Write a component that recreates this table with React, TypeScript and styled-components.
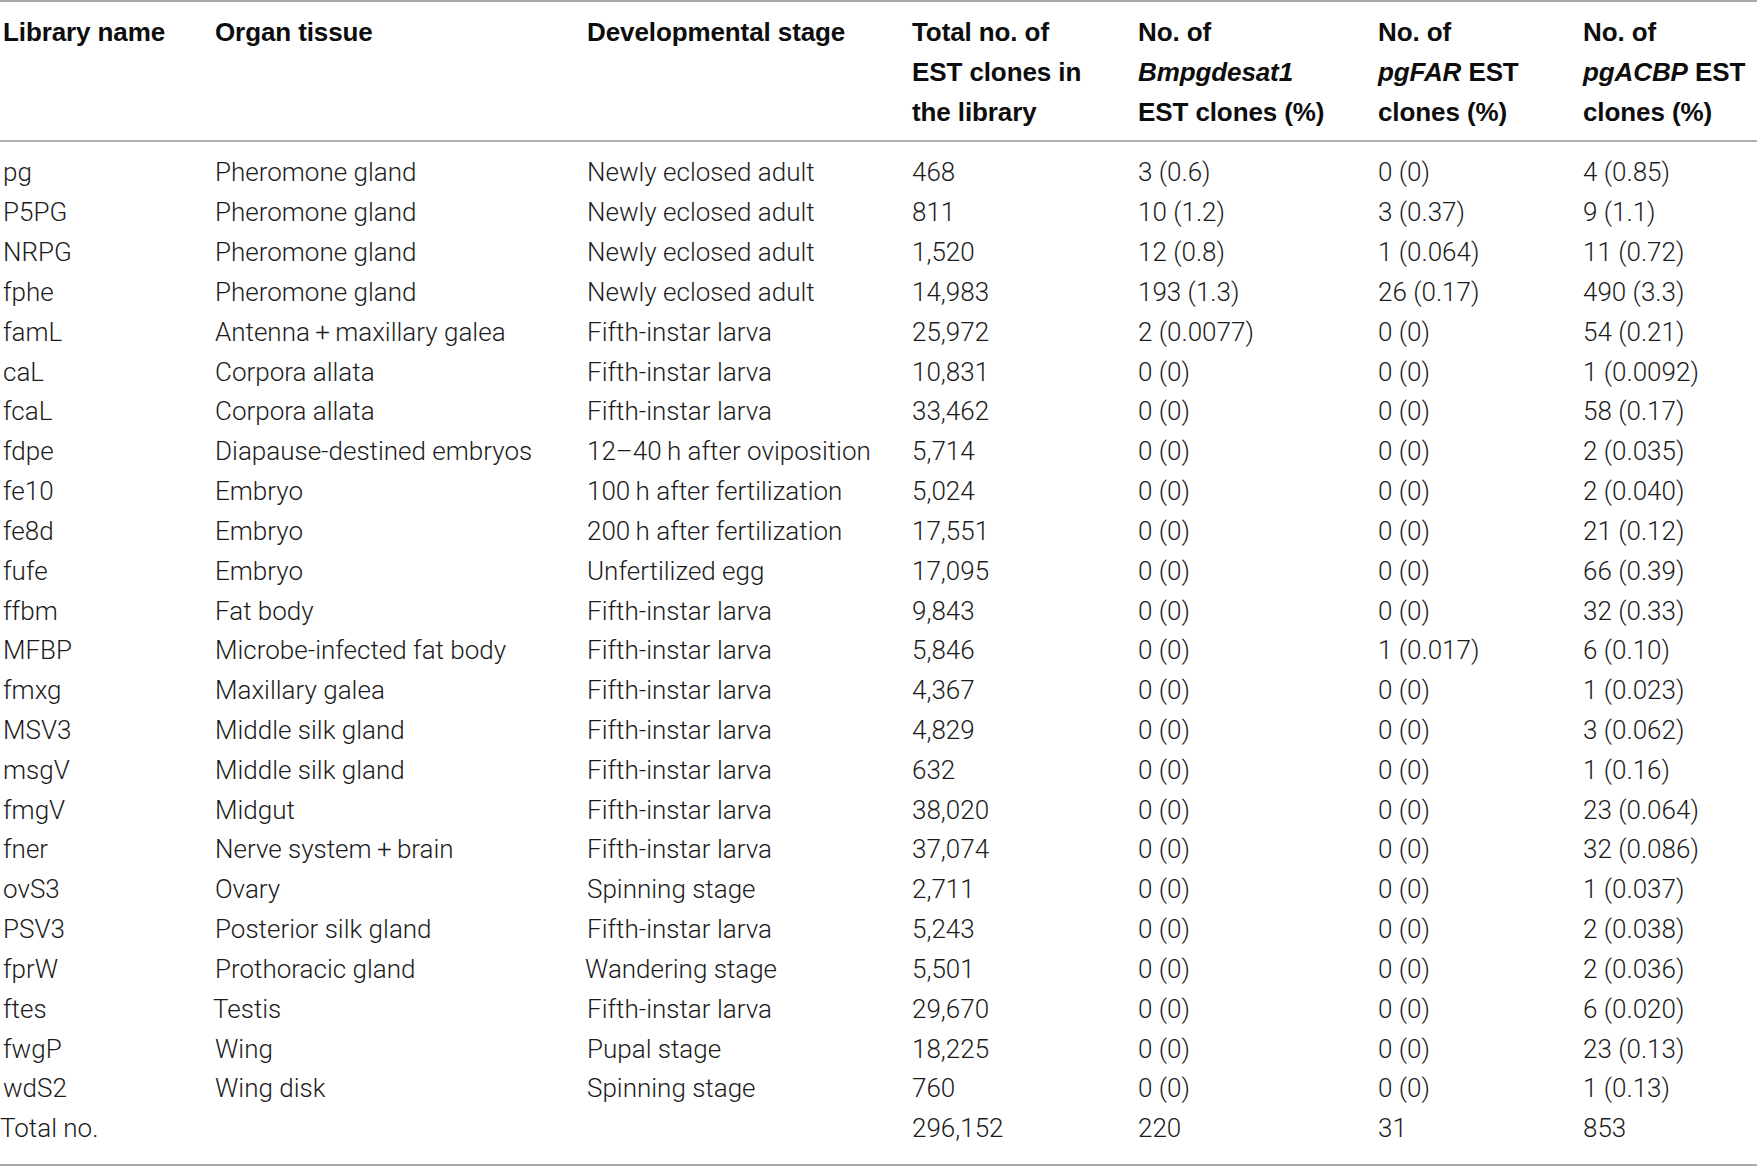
import React from "react";
import styled, { createGlobalStyle } from "styled-components";

const Global = createGlobalStyle`
  html, body { margin: 0; padding: 0; background: #ffffff; }
  body { font-family: Roboto, "Liberation Sans", sans-serif; color: #1c1c1c; }
`;

const COLS = "212px 372px 325px 226px 240px 205px 1fr";

const Table = styled.div`
  width: 1757px;
  border-top: 2px solid #a8a8a8;
  border-bottom: 2px solid #a8a8a8;
  box-sizing: border-box;
`;

const Header = styled.div`
  display: grid;
  grid-template-columns: ${COLS};
  padding: 11px 0 8px 3px;
  border-bottom: 2px solid #b0b0b0;
`;

const HeadCell = styled.div`
  font-family: "Liberation Sans", Arial, sans-serif;
  font-weight: 700;
  font-size: 26px;
  line-height: 39.8px;
  color: #0d0d0d;
  letter-spacing: -0.1px;
  white-space: nowrap;
  em { font-style: italic; }
`;

const Body = styled.div`
  padding: 11px 0 15px 0;
`;

const Row = styled.div`
  display: grid;
  grid-template-columns: ${COLS};
  padding-left: 3px;
  height: 39.83px;
  align-items: center;
`;

const Cell = styled.div<{ $shift?: number }>`
  font-weight: 300;
  font-size: 26px;
  line-height: 39.8px;
  white-space: nowrap;
  margin-left: ${(p) => p.$shift ?? 0}px;
`;

type R = [string, string, string, string, string, string, string, number?, number?];

const rows: R[] = [
  ["pg", "Pheromone gland", "Newly eclosed adult", "468", "3 (0.6)", "0 (0)", "4 (0.85)"],
  ["P5PG", "Pheromone gland", "Newly eclosed adult", "811", "10 (1.2)", "3 (0.37)", "9 (1.1)"],
  ["NRPG", "Pheromone gland", "Newly eclosed adult", "1,520", "12 (0.8)", "1 (0.064)", "11 (0.72)"],
  ["fphe", "Pheromone gland", "Newly eclosed adult", "14,983", "193 (1.3)", "26 (0.17)", "490 (3.3)"],
  ["famL", "Antenna\u2009+\u2009maxillary galea", "Fifth-instar larva", "25,972", "2 (0.0077)", "0 (0)", "54 (0.21)"],
  ["caL", "Corpora allata", "Fifth-instar larva", "10,831", "0 (0)", "0 (0)", "1 (0.0092)"],
  ["fcaL", "Corpora allata", "Fifth-instar larva", "33,462", "0 (0)", "0 (0)", "58 (0.17)"],
  ["fdpe", "Diapause-destined embryos", "12\u201340\u2009h after oviposition", "5,714", "0 (0)", "0 (0)", "2 (0.035)"],
  ["fe10", "Embryo", "100\u2009h after fertilization", "5,024", "0 (0)", "0 (0)", "2 (0.040)"],
  ["fe8d", "Embryo", "200\u2009h after fertilization", "17,551", "0 (0)", "0 (0)", "21 (0.12)"],
  ["fufe", "Embryo", "Unfertilized egg", "17,095", "0 (0)", "0 (0)", "66 (0.39)"],
  ["ffbm", "Fat body", "Fifth-instar larva", "9,843", "0 (0)", "0 (0)", "32 (0.33)"],
  ["MFBP", "Microbe-infected fat body", "Fifth-instar larva", "5,846", "0 (0)", "1 (0.017)", "6 (0.10)"],
  ["fmxg", "Maxillary galea", "Fifth-instar larva", "4,367", "0 (0)", "0 (0)", "1 (0.023)"],
  ["MSV3", "Middle silk gland", "Fifth-instar larva", "4,829", "0 (0)", "0 (0)", "3 (0.062)"],
  ["msgV", "Middle silk gland", "Fifth-instar larva", "632", "0 (0)", "0 (0)", "1 (0.16)"],
  ["fmgV", "Midgut", "Fifth-instar larva", "38,020", "0 (0)", "0 (0)", "23 (0.064)"],
  ["fner", "Nerve system\u2009+\u2009brain", "Fifth-instar larva", "37,074", "0 (0)", "0 (0)", "32 (0.086)"],
  ["ovS3", "Ovary", "Spinning stage", "2,711", "0 (0)", "0 (0)", "1 (0.037)"],
  ["PSV3", "Posterior silk gland", "Fifth-instar larva", "5,243", "0 (0)", "0 (0)", "2 (0.038)"],
  ["fprW", "Prothoracic gland", "Wandering stage", "5,501", "0 (0)", "0 (0)", "2 (0.036)", 0, -2],
  ["ftes", "Testis", "Fifth-instar larva", "29,670", "0 (0)", "0 (0)", "6 (0.020)", -2, 0],
  ["fwgP", "Wing", "Pupal stage", "18,225", "0 (0)", "0 (0)", "23 (0.13)"],
  ["wdS2", "Wing disk", "Spinning stage", "760", "0 (0)", "0 (0)", "1 (0.13)"],
];

export default function App() {
  return (
    <>
      <Global />
      <Table>
        <Header>
          <HeadCell>Library name</HeadCell>
          <HeadCell>Organ tissue</HeadCell>
          <HeadCell>Developmental stage</HeadCell>
          <HeadCell>
            Total no. of<br />EST clones in<br />the library
          </HeadCell>
          <HeadCell>
            No. of<br /><em>Bmpgdesat1</em><br />EST clones (%)
          </HeadCell>
          <HeadCell>
            No. of<br /><em>pgFAR</em> EST<br />clones (%)
          </HeadCell>
          <HeadCell>
            No. of<br /><em>pgACBP</em> EST<br />clones (%)
          </HeadCell>
        </Header>
        <Body>
          {rows.map((r) => (
            <Row key={r[0]}>
              <Cell>{r[0]}</Cell>
              <Cell $shift={r[7]}>{r[1]}</Cell>
              <Cell $shift={r[8]}>{r[2]}</Cell>
              <Cell>{r[3]}</Cell>
              <Cell>{r[4]}</Cell>
              <Cell>{r[5]}</Cell>
              <Cell>{r[6]}</Cell>
            </Row>
          ))}
          <Row>
            <Cell $shift={-3}>Total no.</Cell>
            <Cell />
            <Cell />
            <Cell>296,152</Cell>
            <Cell>220</Cell>
            <Cell>31</Cell>
            <Cell>853</Cell>
          </Row>
        </Body>
      </Table>
    </>
  );
}
